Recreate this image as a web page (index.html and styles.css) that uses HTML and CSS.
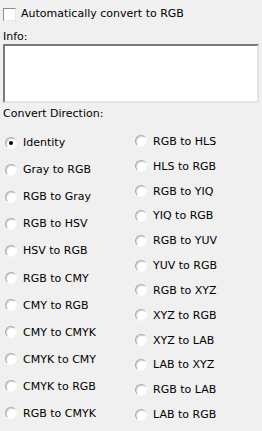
FILE: index.html
```html
<!DOCTYPE html>
<html>
  <head>
    <title>Convert</title>
    <link rel="stylesheet" href="styles.css">
  </head>
  <body>
    <div class="panel">
      <label class="auto">
        <span class="check"></span>
        Automatically convert to RGB
      </label>

      <div class="caption info-caption">Info:</div>
      <textarea class="info"></textarea>

      <div class="caption dir-caption">Convert Direction:</div>

      <div class="columns">
        <div class="col">
          <div class="opt"><span class="radio on"></span>Identity</div>
          <div class="opt"><span class="radio"></span>Gray to RGB</div>
          <div class="opt"><span class="radio"></span>RGB to Gray</div>
          <div class="opt"><span class="radio"></span>RGB to HSV</div>
          <div class="opt"><span class="radio"></span>HSV to RGB</div>
          <div class="opt"><span class="radio"></span>RGB to CMY</div>
          <div class="opt"><span class="radio"></span>CMY to RGB</div>
          <div class="opt"><span class="radio"></span>CMY to CMYK</div>
          <div class="opt"><span class="radio"></span>CMYK to CMY</div>
          <div class="opt"><span class="radio"></span>CMYK to RGB</div>
          <div class="opt"><span class="radio"></span>RGB to CMYK</div>
        </div>
        <div class="col">
          <div class="opt"><span class="radio"></span>RGB to HLS</div>
          <div class="opt"><span class="radio"></span>HLS to RGB</div>
          <div class="opt"><span class="radio"></span>RGB to YIQ</div>
          <div class="opt"><span class="radio"></span>YIQ to RGB</div>
          <div class="opt"><span class="radio"></span>RGB to YUV</div>
          <div class="opt"><span class="radio"></span>YUV to RGB</div>
          <div class="opt"><span class="radio"></span>RGB to XYZ</div>
          <div class="opt"><span class="radio"></span>XYZ to RGB</div>
          <div class="opt"><span class="radio"></span>XYZ to LAB</div>
          <div class="opt"><span class="radio"></span>LAB to XYZ</div>
          <div class="opt"><span class="radio"></span>RGB to LAB</div>
          <div class="opt"><span class="radio"></span>LAB to RGB</div>
        </div>
      </div>
    </div>
  </body>
</html>
```

FILE: styles.css
```css
body {
  margin: 0;
  background: #f0f0f0;
  font-family: "DejaVu Sans", Verdana, sans-serif;
  font-size: 11px;
  color: #000;
}

.panel {
  padding: 0 4px 0 3px;
}

.auto {
  display: flex;
  align-items: center;
  height: 14px;
  margin-top: 7px;
  line-height: 14px;
}

.check {
  width: 11px;
  height: 11px;
  background: #fff;
  border: 1px solid;
  border-color: #8a8a8a #e6e6e6 #e6e6e6 #8a8a8a;
  margin-right: 5px;
}

.caption {
  line-height: 13px;
}

.info-caption {
  margin-top: 9px;
}

.info {
  display: block;
  box-sizing: border-box;
  width: 256px;
  height: 59px;
  margin: 1px 0 0 0;
  padding: 0;
  background: #fff;
  border: 2px solid;
  border-color: #7a7a7a #e3e3e3 #e3e3e3 #7a7a7a;
  resize: none;
}

.dir-caption {
  margin-top: 4px;
}

.columns {
  display: grid;
  grid-template-columns: 130px 1fr;
  height: 298px;
  margin-top: 9px;
}

.col {
  display: flex;
  flex-direction: column;
  padding-left: 2px;
}

.opt {
  flex: 1;
  display: flex;
  align-items: center;
}

.radio {
  position: relative;
  box-sizing: border-box;
  width: 12px;
  height: 12px;
  margin-right: 6px;
  border-radius: 50%;
  background: #fff;
  border: 1px solid;
  border-color: #a8a8a8 #f8f8f8 #f8f8f8 #a8a8a8;
  box-shadow: inset 1px 1px 0 #d6d6d6;
}

.radio.on::after {
  content: "";
  position: absolute;
  left: 3px;
  top: 3px;
  width: 4px;
  height: 4px;
  border-radius: 50%;
  background: #000;
}
```
